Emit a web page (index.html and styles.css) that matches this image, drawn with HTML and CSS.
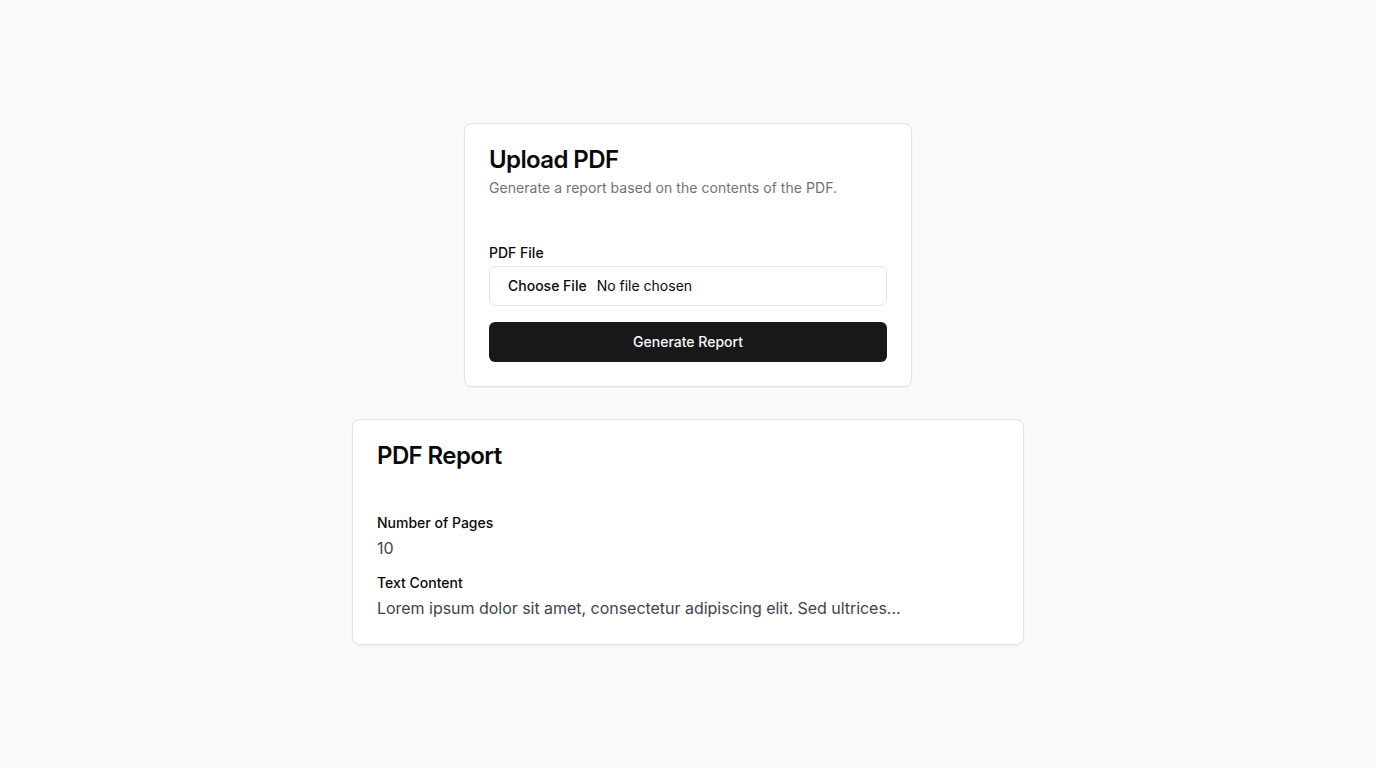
FILE: index.html
```html
<!DOCTYPE html>
<html lang="en">
<head>
<meta charset="utf-8">
<title>PDF Report</title>
<link rel="stylesheet" href="styles.css">
</head>
<body>
<main class="page">
  <section class="card card-upload">
    <header class="card-header">
      <h1 class="card-title">Upload PDF</h1>
      <p class="card-desc">Generate a report based on the contents of the PDF.</p>
    </header>
    <div class="card-content">
      <form class="form">
        <div class="field">
          <label class="label">PDF File</label>
          <div class="file-input">
            <span class="file-btn">Choose File</span>
            <span class="file-name">No file chosen</span>
          </div>
        </div>
        <button type="button" class="btn">Generate Report</button>
      </form>
    </div>
  </section>

  <section class="card card-report">
    <header class="card-header">
      <h2 class="card-title">PDF Report</h2>
    </header>
    <div class="card-content">
      <div class="report">
        <div class="item">
          <div class="label">Number of Pages</div>
          <div class="value">10</div>
        </div>
        <div class="item">
          <div class="label">Text Content</div>
          <div class="value">Lorem ipsum dolor sit amet, consectetur adipiscing elit. Sed ultrices...</div>
        </div>
      </div>
    </div>
  </section>
</main>
</body>
</html>
```

FILE: styles.css
```css
* { box-sizing: border-box; }
html, body { margin: 0; padding: 0; }
body {
  background: #f9fafb;
  font-family: Inter, "Liberation Sans", sans-serif;
  color: #09090b;
}
.page {
  min-height: 768px;
  display: flex;
  flex-direction: column;
  align-items: center;
  justify-content: center;
  gap: 32px;
}
.card {
  background: #fff;
  border: 1px solid #e4e4e7;
  border-radius: 8px;
  box-shadow: 0 1px 2px rgba(0,0,0,0.05);
  width: 100%;
}
.card-upload { max-width: 448px; }
.card-report { max-width: 672px; }
.card-header {
  padding: 24px;
  display: flex;
  flex-direction: column;
  gap: 6px;
}
.card-title {
  margin: 0;
  font-size: 24px;
  line-height: 24px;
  font-weight: 600;
  letter-spacing: -0.6px;
}
.card-desc {
  margin: 0;
  font-size: 14px;
  line-height: 20px;
  color: #71717a;
  letter-spacing: 0.05px;
}
.card-content {
  padding: 21px 24px 24px;
}
.form {
  display: flex;
  flex-direction: column;
  gap: 16px;
}
.field {
  display: flex;
  flex-direction: column;
  gap: 3px;
}
.label {
  font-size: 14px;
  line-height: 20px;
  font-weight: 500;
  color: #09090b;
}
.file-input {
  height: 40px;
  border: 1px solid #e4e4e7;
  border-radius: 6px;
  display: flex;
  align-items: center;
  padding: 0 18px 1px;
  font-size: 14px;
}
.file-btn {
  font-weight: 500;
  margin-right: 10px;
}
.file-name { color: #09090b; }
.btn {
  height: 40px;
  border: 0;
  border-radius: 6px;
  background: #18181b;
  color: #fafafa;
  font-family: inherit;
  font-size: 14px;
  font-weight: 500;
  width: 100%;
  padding: 0 0 1px;
}
.report {
  display: flex;
  flex-direction: column;
  gap: 13px;
}
.item {
  display: flex;
  flex-direction: column;
  gap: 3px;
}
.value {
  font-size: 16px;
  line-height: 24px;
  color: #3f4451;
  letter-spacing: -0.03px;
}
```
